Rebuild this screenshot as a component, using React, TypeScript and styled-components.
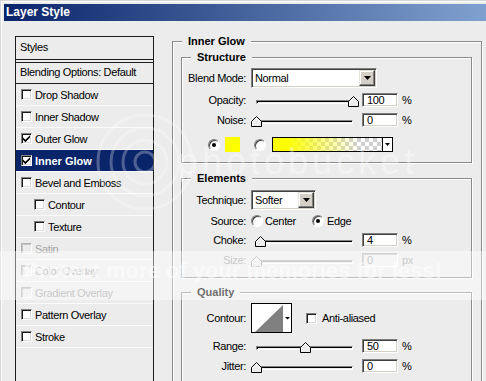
import React from "react";
import styled, { createGlobalStyle, css } from "styled-components";

const GlobalStyle = createGlobalStyle`
  html, body { margin: 0; padding: 0; background: #ececec; }
  body { font-family: "Liberation Sans", Arial, sans-serif; font-size: 11px; }
`;

const Window = styled.div`
  position: relative;
  width: 486px;
  height: 381px;
  overflow: hidden;
  box-sizing: border-box;
  padding: 4px 0 0 4px;
  background: #ececec;
  box-shadow: inset 1px 1px 0 #d6d6d6, inset 2px 2px 0 #ffffff;
  font-family: "Liberation Sans", Arial, sans-serif;
  font-size: 11px;
  color: #000;
  letter-spacing: -0.35px;
`;

const TitleBar = styled.div`
  height: 17px;
  background: linear-gradient(to right, #0a246a 0px, #a6caf0 640px);
  color: #fff;
  font-weight: bold;
  font-size: 12px;
  letter-spacing: 0;
  line-height: 17px;
  padding-left: 2px;
  white-space: nowrap;
`;

const Body = styled.div`
  display: flex;
  align-items: flex-start;
  padding: 15px 0 0 11px;
`;

/* ---------- left list ---------- */

const StyleList = styled.div`
  flex: none;
  width: 139px;
  height: 370px;
  box-sizing: border-box;
  border: 1px solid #1c1c1c;
  display: flex;
  flex-direction: column;
`;

const ListHeader = styled.div`
  height: 22px;
  line-height: 21px;
  padding-left: 4px;
  border-bottom: 1px solid #1c1c1c;
`;

const BlendingRow = styled.div`
  height: 20px;
  line-height: 18px;
  margin-top: 2px;
  padding-left: 4px;
  border-top: 1px solid #1c1c1c;
  border-bottom: 1px solid #1c1c1c;
  white-space: nowrap;
`;

const ListItem = styled.div<{ $indent?: boolean; $selected?: boolean; $disabled?: boolean }>`
  height: 21px;
  border-bottom: 1px solid #fafafa;
  display: flex;
  align-items: center;
  gap: 3px;
  padding-left: ${(p) => (p.$indent ? 18 : 5)}px;
  white-space: nowrap;
  color: ${(p) => (p.$disabled ? "#a3a3a3" : "#000")};
  ${(p) =>
    p.$selected &&
    css`
      background: #0a246a;
      color: #fff;
      font-weight: bold;
      letter-spacing: 0;
    `}
`;

const CheckBox = styled.span<{ $disabled?: boolean }>`
  flex: none;
  width: 11px;
  height: 11px;
  box-sizing: border-box;
  background: ${(p) => (p.$disabled ? "#ececec" : "#fff")};
  border: 1px solid;
  border-color: ${(p) => (p.$disabled ? "#b4b4b4 #fff #fff #b4b4b4" : "#808080 #fff #fff #808080")};
  box-shadow: ${(p) =>
    p.$disabled
      ? "inset 1px 1px 0 #c4c4c4"
      : "inset 1px 1px 0 #1a1a1a, inset -1px -1px 0 #d8d8d8"};
  display: inline-flex;
  align-items: center;
  justify-content: center;
`;

const CheckMark = () => (
  <svg width="7" height="7" viewBox="0 0 7 7">
    <path d="M0 2.4 L2.4 4.8 L7 0.2 V2.6 L2.4 7.2 L0 4.8Z" fill="#000" />
  </svg>
);

/* ---------- right settings ---------- */

const Settings = styled.div`
  flex: none;
  width: 310px;
  margin-left: 18px;
  padding-top: 5px;
`;

const Group = styled.div<{ $gap?: number }>`
  position: relative;
  box-sizing: border-box;
  border: 1px solid #8a8a8a;
  box-shadow: inset 1px 1px 0 #fff, 1px 1px 0 #fff;
  margin-top: ${(p) => p.$gap ?? 0}px;
`;

const OuterGroup = styled(Group)`
  padding: 15px 9px 40px 8px;
`;

const InnerGroup = styled(Group)<{ $top: number }>`
  padding: ${(p) => p.$top}px 0 10px 0;
`;

const Legend = styled.span`
  position: absolute;
  top: -7px;
  left: 9px;
  padding: 0 6px;
  background: #ececec;
  font-weight: bold;
  letter-spacing: 0;
  line-height: 13px;
  white-space: nowrap;
`;

const FieldRow = styled.div<{ $h?: number; $mt?: number }>`
  display: grid;
  grid-template-columns: 64px auto;
  column-gap: 5px;
  align-items: center;
  height: ${(p) => p.$h ?? 14}px;
  margin-top: ${(p) => p.$mt ?? 0}px;
`;

const Label = styled.span<{ $disabled?: boolean }>`
  text-align: right;
  white-space: nowrap;
  color: ${(p) => (p.$disabled ? "#a3a3a3" : "#000")};
`;

const Control = styled.div`
  display: flex;
  align-items: center;
  white-space: nowrap;
`;

const Select = styled.div<{ $w: number }>`
  width: ${(p) => p.$w}px;
  height: 20px;
  box-sizing: border-box;
  border: 1px solid;
  border-color: #808080 #fff #fff #808080;
  box-shadow: inset 1px 1px 0 #404040, inset -1px -1px 0 #d4d0c8;
  background: #fff;
  display: flex;
  padding: 1px;
`;

const SelectText = styled.span`
  flex: 1;
  padding-left: 2px;
  line-height: 17px;
`;

const DropButton = styled.span`
  width: 16px;
  box-sizing: border-box;
  background: #d4d0c8;
  border: 1px solid;
  border-color: #e6e3dc #404040 #404040 #e6e3dc;
  box-shadow: inset -1px -1px 0 #808080, inset 1px 1px 0 #fff;
  display: flex;
  align-items: center;
  justify-content: center;
`;

const DownArrow = ({ w = 7, h = 4 }: { w?: number; h?: number }) => (
  <svg width={w} height={h} viewBox={`0 0 ${w} ${h}`}>
    <path d={`M0 0H${w}L${w / 2} ${h}Z`} fill="#000" />
  </svg>
);

const Slider = styled.div`
  position: relative;
  flex: none;
  width: 107px;
  height: 14px;
  box-sizing: border-box;
  padding: 7px 5px 0 5px;
`;

const Track = styled.div<{ $disabled?: boolean }>`
  height: 4px;
  box-sizing: border-box;
  border: 1px solid;
  border-color: ${(p) => (p.$disabled ? "#b0b0b0 #fff #fff #b0b0b0" : "#808080 #fff #fff #808080")};
  box-shadow: inset 1px 1px 0 ${(p) => (p.$disabled ? "#a8a8a8" : "#000")};
  background: #ececec;
`;

const ThumbWrap = styled.span`
  position: absolute;
  top: 3px;
  width: 11px;
  height: 11px;
  display: block;
  line-height: 0;
`;

const Thumb = ({ value, disabled }: { value: number; disabled?: boolean }) => (
  <ThumbWrap style={{ left: `${value * 0.97}px` }}>
    <svg width="11" height="11" viewBox="0 0 11 11">
      <path
        d="M0.5 10.5V5.5L5.5 0.5L10.5 5.5V10.5Z"
        fill="#ececec"
        stroke={disabled ? "#a8a8a8" : "#000"}
      />
      <path d="M1.5 9.5V5.9L5.5 1.9L9.1 5.5" fill="none" stroke="#fff" />
    </svg>
  </ThumbWrap>
);

const NumberBox = styled.span<{ $disabled?: boolean }>`
  flex: none;
  width: 36px;
  height: 14px;
  box-sizing: border-box;
  margin-left: 4px;
  border: 1px solid;
  border-color: ${(p) => (p.$disabled ? "#b4b4b4 #fff #fff #b4b4b4" : "#808080 #fff #fff #808080")};
  box-shadow: ${(p) =>
    p.$disabled ? "inset 1px 1px 0 #c8c8c8" : "inset 1px 1px 0 #404040, inset -1px -1px 0 #d4d0c8"};
  background: ${(p) => (p.$disabled ? "#f0f0f0" : "#fff")};
  color: ${(p) => (p.$disabled ? "#a3a3a3" : "#000")};
  padding-left: 4px;
  line-height: 12px;
`;

const Unit = styled.span<{ $disabled?: boolean }>`
  margin-left: 4px;
  color: ${(p) => (p.$disabled ? "#a3a3a3" : "#000")};
`;

const Radio = styled.span<{ $checked?: boolean; $ml?: number }>`
  flex: none;
  position: relative;
  width: 12px;
  height: 12px;
  box-sizing: border-box;
  border-radius: 50%;
  background: #fff;
  border: 1px solid;
  border-color: #808080 #fff #fff #808080;
  box-shadow: inset 1px 1px 0 #404040;
  margin-left: ${(p) => p.$ml ?? 0}px;
  ${(p) =>
    p.$checked &&
    css`
      &::after {
        content: "";
        position: absolute;
        left: 3px;
        top: 3px;
        width: 4px;
        height: 4px;
        border-radius: 50%;
        background: #000;
      }
    `}
`;

const RadioText = styled.span<{ $ml?: number }>`
  margin-left: ${(p) => p.$ml ?? 3}px;
`;

const ColorRow = styled.div`
  display: flex;
  align-items: center;
  height: 15px;
  margin-top: 10px;
  padding-left: 26px;
`;

const Swatch = styled.span`
  flex: none;
  width: 15px;
  height: 15px;
  margin-left: 5px;
  background: #ffff00;
`;

const GradientPicker = styled.div`
  flex: none;
  width: 121px;
  height: 15px;
  margin-left: 6px;
  box-sizing: border-box;
  border: 1px solid #000;
  display: flex;
`;

const GradientFill = styled.div`
  flex: 1;
  border-right: 1px solid #000;
  background: linear-gradient(
      to right,
      #ffff00 0%,
      #ffff00 12%,
      rgba(255, 255, 0, 0.55) 40%,
      rgba(255, 255, 0, 0) 78%
    ),
    repeating-conic-gradient(#cfcfcf 0 25%, #ffffff 0 50%) 0 0 / 8px 8px;
`;

const GradientArrow = styled.span`
  width: 9px;
  background: #fff;
  display: flex;
  align-items: center;
  justify-content: center;
`;

const ContourBox = styled.div`
  flex: none;
  width: 41px;
  height: 30px;
  box-sizing: border-box;
  border: 1px solid #000;
  background: #fff;
  line-height: 0;
`;

const AntiCheck = styled(CheckBox)`
  margin-left: 14px;
`;

const CheckText = styled.span`
  margin-left: 5px;
`;

/* ---------- watermark overlay ---------- */

const Watermark = styled.div`
  position: absolute;
  inset: 0;
  pointer-events: none;
  overflow: hidden;
`;

const WatermarkBand = styled.div`
  position: absolute;
  left: 0;
  right: 0;
  top: 251px;
  height: 49px;
  background: rgba(255, 255, 255, 0.42);
`;

const WatermarkSlogan = styled.div`
  position: absolute;
  left: 24px;
  top: 258px;
  font-family: "Liberation Sans", Arial, sans-serif;
  font-weight: bold;
  font-size: 22px;
  letter-spacing: 0;
  line-height: 26px;
  color: rgba(255, 255, 255, 0.55);
  white-space: nowrap;
`;

const WatermarkBrand = styled.div`
  position: absolute;
  left: 178px;
  top: 144px;
  font-family: "Liberation Sans", Arial, sans-serif;
  font-size: 36px;
  letter-spacing: 4px;
  line-height: 36px;
  color: rgba(255, 255, 255, 0.38);
  white-space: nowrap;
`;

const WatermarkLogo = styled.svg`
  position: absolute;
  left: 90px;
  top: 105px;
`;

type Item = {
  label: string;
  checked?: boolean;
  selected?: boolean;
  indent?: boolean;
  disabled?: boolean;
};

const items: Item[] = [
  { label: "Drop Shadow" },
  { label: "Inner Shadow" },
  { label: "Outer Glow", checked: true },
  { label: "Inner Glow", checked: true, selected: true },
  { label: "Bevel and Emboss" },
  { label: "Contour", indent: true },
  { label: "Texture", indent: true },
  { label: "Satin", disabled: true },
  { label: "Color Overlay", disabled: true },
  { label: "Gradient Overlay", disabled: true },
  { label: "Pattern Overlay" },
  { label: "Stroke" },
];

const SliderField = ({
  label,
  value,
  unit,
  mt,
  disabled,
}: {
  label: string;
  value: number;
  unit: string;
  mt: number;
  disabled?: boolean;
}) => (
  <FieldRow $mt={mt}>
    <Label $disabled={disabled}>{label}</Label>
    <Control>
      <Slider>
        <Track $disabled={disabled} />
        <Thumb value={value} disabled={disabled} />
      </Slider>
      <NumberBox $disabled={disabled}>{value}</NumberBox>
      <Unit $disabled={disabled}>{unit}</Unit>
    </Control>
  </FieldRow>
);

export default function App() {
  return (
    <>
      <GlobalStyle />
      <Window>
        <TitleBar>Layer Style</TitleBar>
        <Body>
          <StyleList>
            <ListHeader>Styles</ListHeader>
            <BlendingRow>Blending Options: Default</BlendingRow>
            {items.map((it) => (
              <ListItem
                key={it.label}
                $indent={it.indent}
                $selected={it.selected}
                $disabled={it.disabled}
              >
                <CheckBox $disabled={it.disabled}>{it.checked && <CheckMark />}</CheckBox>
                <span>{it.label}</span>
              </ListItem>
            ))}
          </StyleList>

          <Settings>
            <OuterGroup>
              <Legend>Inner Glow</Legend>

              <InnerGroup $top={10}>
                <Legend>Structure</Legend>
                <FieldRow $h={20}>
                  <Label>Blend Mode:</Label>
                  <Select $w={126}>
                    <SelectText>Normal</SelectText>
                    <DropButton>
                      <DownArrow />
                    </DropButton>
                  </Select>
                </FieldRow>
                <SliderField label="Opacity:" value={100} unit="%" mt={5} />
                <SliderField label="Noise:" value={0} unit="%" mt={6} />
                <ColorRow>
                  <Radio $checked />
                  <Swatch />
                  <Radio $ml={14} />
                  <GradientPicker>
                    <GradientFill />
                    <GradientArrow>
                      <DownArrow w={5} h={3} />
                    </GradientArrow>
                  </GradientPicker>
                </ColorRow>
              </InnerGroup>

              <InnerGroup $top={11} $gap={15}>
                <Legend>Elements</Legend>
                <FieldRow $h={20}>
                  <Label>Technique:</Label>
                  <Select $w={65}>
                    <SelectText>Softer</SelectText>
                    <DropButton>
                      <DownArrow />
                    </DropButton>
                  </Select>
                </FieldRow>
                <FieldRow $mt={4}>
                  <Label>Source:</Label>
                  <Control>
                    <Radio />
                    <RadioText $ml={2}>Center</RadioText>
                    <Radio $checked $ml={16} />
                    <RadioText $ml={3}>Edge</RadioText>
                  </Control>
                </FieldRow>
                <SliderField label="Choke:" value={4} unit="%" mt={5} />
                <SliderField label="Size:" value={0} unit="px" mt={6} disabled />
              </InnerGroup>

              <InnerGroup $top={10} $gap={14}>
                <Legend>Quality</Legend>
                <FieldRow $h={30}>
                  <Label>Contour:</Label>
                  <Control>
                    <ContourBox>
                      <svg width="39" height="28" viewBox="0 0 39 28">
                        <path d="M3 28L31 1V28Z" fill="#808080" />
                        <path d="M33 13H38L35.5 15.5Z" fill="#000" />
                      </svg>
                    </ContourBox>
                    <AntiCheck />
                    <CheckText>Anti-aliased</CheckText>
                  </Control>
                </FieldRow>
                <SliderField label="Range:" value={50} unit="%" mt={6} />
                <SliderField label="Jitter:" value={0} unit="%" mt={6} />
              </InnerGroup>
            </OuterGroup>
          </Settings>
        </Body>

        <Watermark>
          <WatermarkLogo width="110" height="110" viewBox="0 0 110 110">
            {[10, 22, 34, 47].map((r) => (
              <circle
                key={r}
                cx="55"
                cy="57"
                r={r}
                fill="none"
                stroke="rgba(255,255,255,0.28)"
                strokeWidth="3"
              />
            ))}
          </WatermarkLogo>
          <WatermarkBrand>photobucket</WatermarkBrand>
          <WatermarkBand />
          <WatermarkSlogan>Protect more of your memories for less!</WatermarkSlogan>
        </Watermark>
      </Window>
    </>
  );
}
